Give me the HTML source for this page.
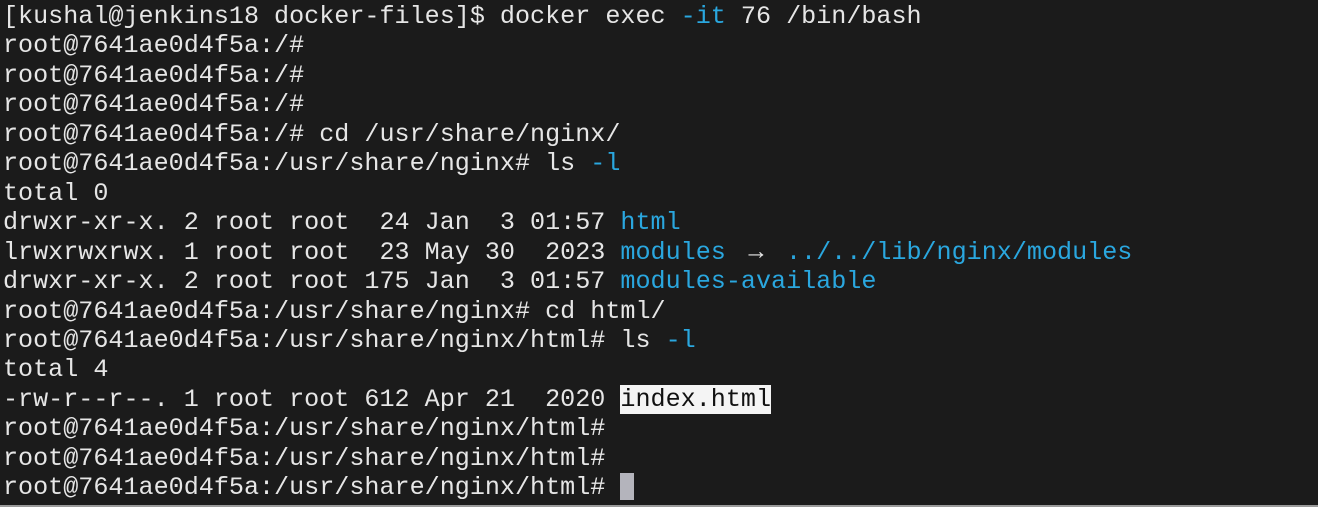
<!DOCTYPE html>
<html><head><style>
html,body{margin:0;padding:0;width:1318px;height:517px;overflow:hidden;background:#fff}
#t{position:absolute;left:0;top:0;width:1318px;height:507px;background:#1b1b1b;border-bottom:2px solid #9a9a9a;box-sizing:border-box}
pre{margin:0;position:absolute;left:3px;top:2px;font-family:"Liberation Mono","DejaVu Sans Mono",monospace;font-size:25.1px;line-height:29.45px;color:#e6e6e6}
.b{color:#2aa7df}
.h{background:#f4f4f4;color:#111}
.c{display:inline-block;width:14px;height:27px;background:#b4b4bc;vertical-align:-6px}
.a{display:inline-block;width:30px;text-align:center}
</style></head><body>
<div id="t"><pre>[kushal@jenkins18 docker-files]$ docker exec <span class="b">-it</span> 76 /bin/bash
root@7641ae0d4f5a:/#
root@7641ae0d4f5a:/#
root@7641ae0d4f5a:/#
root@7641ae0d4f5a:/# cd /usr/share/nginx/
root@7641ae0d4f5a:/usr/share/nginx# ls <span class="b">-l</span>
total 0
drwxr-xr-x. 2 root root  24 Jan  3 01:57 <span class="b">html</span>
lrwxrwxrwx. 1 root root  23 May 30  2023 <span class="b">modules</span> <span class="a">→</span> <span class="b">../../lib/nginx/modules</span>
drwxr-xr-x. 2 root root 175 Jan  3 01:57 <span class="b">modules-available</span>
root@7641ae0d4f5a:/usr/share/nginx# cd html/
root@7641ae0d4f5a:/usr/share/nginx/html# ls <span class="b">-l</span>
total 4
-rw-r--r--. 1 root root 612 Apr 21  2020 <span class="h">index.html</span>
root@7641ae0d4f5a:/usr/share/nginx/html#
root@7641ae0d4f5a:/usr/share/nginx/html#
root@7641ae0d4f5a:/usr/share/nginx/html# <span class="c"></span></pre></div>
</body></html>
